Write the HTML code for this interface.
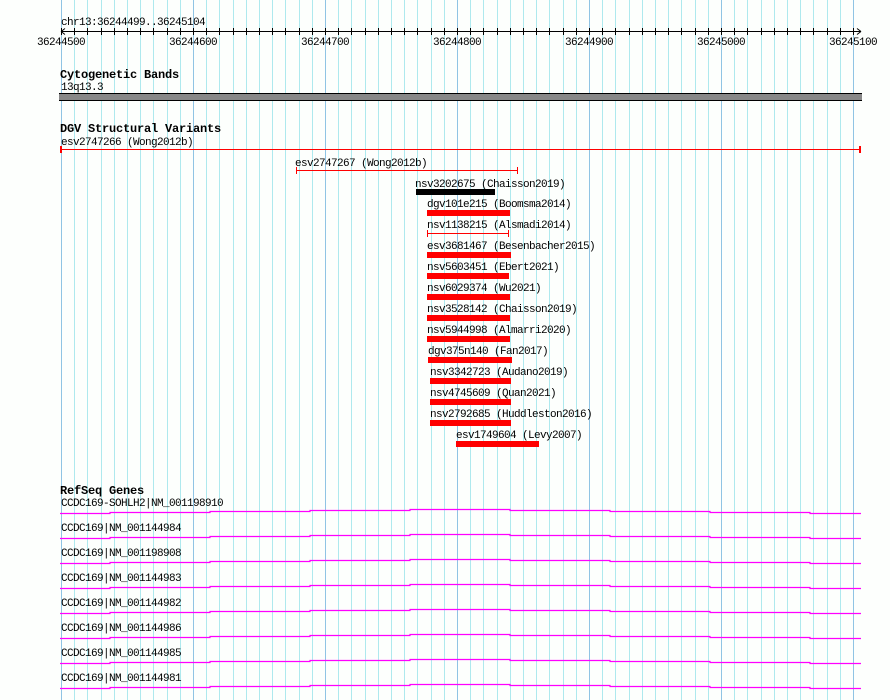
<!DOCTYPE html>
<html><head><meta charset="utf-8"><style>
html,body{margin:0;padding:0;background:#fff;width:890px;height:700px;overflow:hidden}
svg text{font-family:"Liberation Mono","DejaVu Sans Mono",monospace;font-size:11px;letter-spacing:-0.6px;fill:#000}
svg text.t{font-weight:bold;font-size:12px;letter-spacing:-0.2px}
</style></head><body>
<svg width="890" height="700" viewBox="0 0 890 700" xmlns="http://www.w3.org/2000/svg">
<rect width="890" height="700" fill="#fdfffd"/>
<path stroke="#aee9ee" stroke-width="1" fill="none" d="M74.5 0V700M87.5 0V700M101.5 0V700M114.5 0V700M127.5 0V700M140.5 0V700M153.5 0V700M167.5 0V700M180.5 0V700M206.5 0V700M219.5 0V700M233.5 0V700M246.5 0V700M259.5 0V700M272.5 0V700M285.5 0V700M299.5 0V700M312.5 0V700M338.5 0V700M351.5 0V700M365.5 0V700M378.5 0V700M391.5 0V700M404.5 0V700M417.5 0V700M431.5 0V700M444.5 0V700M470.5 0V700M483.5 0V700M497.5 0V700M510.5 0V700M523.5 0V700M536.5 0V700M549.5 0V700M563.5 0V700M576.5 0V700M602.5 0V700M615.5 0V700M629.5 0V700M642.5 0V700M655.5 0V700M668.5 0V700M681.5 0V700M695.5 0V700M708.5 0V700M734.5 0V700M747.5 0V700M761.5 0V700M774.5 0V700M787.5 0V700M800.5 0V700M813.5 0V700M827.5 0V700M840.5 0V700"/>
<path stroke="#90c4e4" stroke-width="1" fill="none" d="M61.5 0V700M193.5 0V700M325.5 0V700M457.5 0V700M589.5 0V700M721.5 0V700M853.5 0V700"/>

<text x="61" y="25">chr13:36244499..36245104</text>
<path stroke="#000" fill="none" d="M61 31.5H861M61 31.5l4 -3M61 31.5l4 3M861 31.5l-4 -3M861 31.5l-4 3"/>
<path stroke="#000" fill="none" d="M61.5 28V35M74.5 28V35M87.5 28V35M101.5 28V35M114.5 28V35M127.5 28V35M140.5 28V35M153.5 28V35M167.5 28V35M180.5 28V35M193.5 28V35M206.5 28V35M219.5 28V35M233.5 28V35M246.5 28V35M259.5 28V35M272.5 28V35M285.5 28V35M299.5 28V35M312.5 28V35M325.5 28V35M338.5 28V35M351.5 28V35M365.5 28V35M378.5 28V35M391.5 28V35M404.5 28V35M417.5 28V35M431.5 28V35M444.5 28V35M457.5 28V35M470.5 28V35M483.5 28V35M497.5 28V35M510.5 28V35M523.5 28V35M536.5 28V35M549.5 28V35M563.5 28V35M576.5 28V35M589.5 28V35M602.5 28V35M615.5 28V35M629.5 28V35M642.5 28V35M655.5 28V35M668.5 28V35M681.5 28V35M695.5 28V35M708.5 28V35M721.5 28V35M734.5 28V35M747.5 28V35M761.5 28V35M774.5 28V35M787.5 28V35M800.5 28V35M813.5 28V35M827.5 28V35M840.5 28V35M853.5 28V35"/>
<g text-anchor="middle">
<text x="61" y="45">36244500</text><text x="193" y="45">36244600</text><text x="325" y="45">36244700</text><text x="457" y="45">36244800</text><text x="589" y="45">36244900</text><text x="721" y="45">36245000</text><text x="853" y="45">36245100</text>
</g>

<text class="t" x="60" y="78">Cytogenetic Bands</text>
<text x="61" y="90">13q13.3</text>
<rect x="59" y="93" width="803" height="8" fill="#888"/>
<path stroke="#000" d="M59 93.5H862M59 100.5H862"/>

<text class="t" x="60" y="132">DGV Structural Variants</text>
<g fill="#f00" stroke="none">
<rect x="61" y="149" width="800" height="1"/><rect x="60" y="146" width="2" height="7"/><rect x="859" y="146" width="2" height="7"/>
<rect x="296" y="170" width="222" height="1"/><rect x="296" y="167" width="1" height="7"/><rect x="517" y="167" width="1" height="7"/>
<rect x="416" y="189" width="79" height="6" fill="#000"/>
<rect x="427" y="210" width="83" height="6"/>
<rect x="427" y="233" width="82" height="1"/><rect x="427" y="230" width="1" height="7"/><rect x="508" y="230" width="1" height="7"/>
<rect x="427" y="252" width="84" height="6"/>
<rect x="427" y="273" width="82" height="6"/>
<rect x="427" y="294" width="83" height="6"/>
<rect x="427" y="315" width="83" height="6"/>
<rect x="427" y="336" width="83" height="6"/>
<rect x="428" y="357" width="84" height="6"/>
<rect x="430" y="378" width="81" height="6"/>
<rect x="430" y="399" width="81" height="6"/>
<rect x="430" y="420" width="81" height="6"/>
<rect x="456" y="441" width="83" height="6"/>
</g>
<g>
<text x="61" y="145">esv2747266 (Wong2012b)</text>
<text x="295" y="166">esv2747267 (Wong2012b)</text>
<text x="415" y="187">nsv3202675 (Chaisson2019)</text>
<text x="427" y="207">dgv101e215 (Boomsma2014)</text>
<text x="427" y="228">nsv1138215 (Alsmadi2014)</text>
<text x="427" y="249">esv3681467 (Besenbacher2015)</text>
<text x="427" y="270">nsv5603451 (Ebert2021)</text>
<text x="427" y="291">nsv6029374 (Wu2021)</text>
<text x="427" y="312">nsv3528142 (Chaisson2019)</text>
<text x="427" y="333">nsv5944998 (Almarri2020)</text>
<text x="428" y="354">dgv375n140 (Fan2017)</text>
<text x="430" y="375">nsv3342723 (Audano2019)</text>
<text x="430" y="396">nsv4745609 (Quan2021)</text>
<text x="430" y="417">nsv2792685 (Huddleston2016)</text>
<text x="456" y="438">esv1749604 (Levy2007)</text>
</g>

<text class="t" x="60" y="494">RefSeq Genes</text>
<defs>
<path id="g" fill="none" stroke="#f0f" stroke-width="1.2" d="M60 0.5H110V-0.5H210V-1.5H310V-2.5H410V-3.5H510V-2.5H610V-1.5H710V-0.5H810V0.5H861"/>
</defs>
<text x="61" y="506">CCDC169-SOHLH2|NM_001198910</text><use href="#g" x="0" y="513"/>
<text x="61" y="531">CCDC169|NM_001144984</text><use href="#g" x="0" y="538"/>
<text x="61" y="556">CCDC169|NM_001198908</text><use href="#g" x="0" y="563"/>
<text x="61" y="581">CCDC169|NM_001144983</text><use href="#g" x="0" y="588"/>
<text x="61" y="606">CCDC169|NM_001144982</text><use href="#g" x="0" y="613"/>
<text x="61" y="631">CCDC169|NM_001144986</text><use href="#g" x="0" y="638"/>
<text x="61" y="656">CCDC169|NM_001144985</text><use href="#g" x="0" y="663"/>
<text x="61" y="681">CCDC169|NM_001144981</text><use href="#g" x="0" y="688"/>
</svg>
</body></html>
